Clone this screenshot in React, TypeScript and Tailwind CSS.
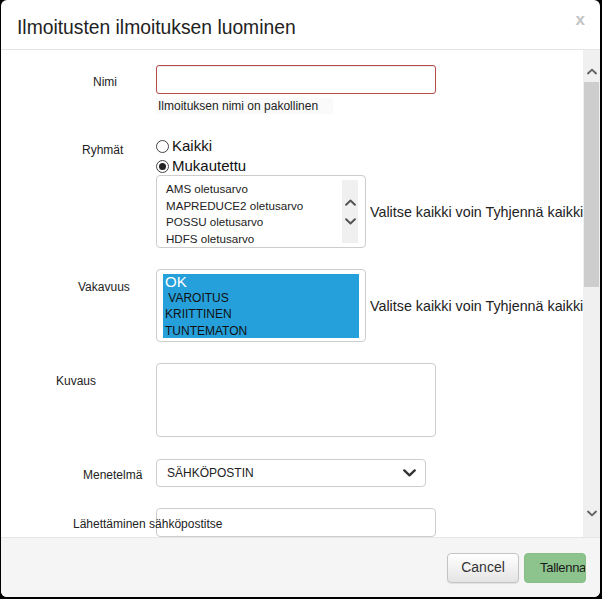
import React from "react";

const Chevron = ({ dir, className }: { dir: "up" | "down"; className?: string }) => (
  <svg viewBox="0 0 10 6" className={className} fill="none">
    <path
      d={dir === "up" ? "M1 5 L5 1.2 L9 5" : "M1 1 L5 4.8 L9 1"}
      stroke="currentColor"
      strokeWidth="1.8"
      strokeLinecap="round"
      strokeLinejoin="round"
    />
  </svg>
);

const Radio = ({ checked }: { checked?: boolean }) => (
  <span className="flex h-[13px] w-[13px] items-center justify-center rounded-full border border-[#444] bg-white">
    {checked && <span className="h-[7px] w-[7px] rounded-full bg-[#222]" />}
  </span>
);

const groups = ["AMS oletusarvo", "MAPREDUCE2 oletusarvo", "POSSU oletusarvo", "HDFS oletusarvo"];

export default function App() {
  return (
    <div className="h-[599px] w-[602px] overflow-hidden bg-black pl-px font-['Liberation_Sans',Arial,sans-serif]">
      <div className="flex h-[597px] w-[599px] flex-col overflow-hidden rounded-[6px] bg-white">
        {/* --- Header --- */}
        <header className="flex h-[50px] shrink-0 items-start justify-between border-b border-[#e5e5e5] pl-[16px] pr-[15px]">
          <h1 className="pt-[17px] text-[19.3px] leading-[22px] text-[#222]">
            Ilmoitusten ilmoituksen luominen
          </h1>
          <span className="pt-[10px] text-[17px] font-bold leading-[20px] text-[#c4c4c4]">x</span>
        </header>

        {/* --- Body --- */}
        <div className="flex min-h-0 flex-1">
          <div className="min-w-0 flex-1 overflow-hidden pt-[15px] text-[12px] text-[#222]">
            {/* Nimi */}
            <div className="flex">
              <div className="w-[155px] shrink-0 pl-[92px] pt-[10px] leading-[14px]">Nimi</div>
              <div>
                <div className="h-[29px] w-[280px] rounded-[3px] border border-[#b44c4a] shadow-[inset_0_1px_1px_rgba(0,0,0,0.075)]" />
                <div className="mt-[4px] w-[177px] bg-[#fafafa] pl-[2px] leading-[16px] text-[#222]">
                  Ilmoituksen nimi on pakollinen
                </div>
              </div>
            </div>

            {/* Ryhmät */}
            <div className="mt-[22px] flex">
              <div className="w-[155px] shrink-0 pl-[81px] pt-[7px] leading-[14px]">Ryhmät</div>
              <div>
                <div className="flex h-[20px] items-center gap-[3px] text-[15px] text-[#111]">
                  <Radio />
                  <span>Kaikki</span>
                </div>
                <div className="mt-px flex h-[18px] items-center gap-[3px] text-[15px] text-[#111]">
                  <Radio checked />
                  <span>Mukautettu</span>
                </div>
                <div className="flex items-center">
                  <div className="flex h-[73px] w-[210px] rounded-[4px] border border-[#cdcdcd] bg-white">
                    <div className="min-w-0 flex-1 overflow-hidden pl-[9px] pt-[5px] text-[11.6px] leading-[16.7px] text-[#222]">
                      {groups.map((g) => (
                        <div key={g} className="whitespace-nowrap">{g}</div>
                      ))}
                    </div>
                    <div className="my-[4px] mr-[7px] flex w-[16px] shrink-0 flex-col items-center justify-center gap-[12px] bg-[#f0f0f0] text-[#555]">
                      <Chevron dir="up" className="h-[7px] w-[11px]" />
                      <Chevron dir="down" className="h-[7px] w-[11px]" />
                    </div>
                  </div>
                  <span className="ml-[4px] mt-[3px] whitespace-nowrap text-[14.3px] text-[#222]">
                    Valitse kaikki voin Tyhjennä kaikki
                  </span>
                </div>
              </div>
            </div>

            {/* Vakavuus */}
            <div className="mt-[21px] flex">
              <div className="w-[155px] shrink-0 pl-[77px] pt-[11px] leading-[14px]">Vakavuus</div>
              <div className="flex items-center">
                <div className="h-[73px] w-[210px] rounded-[4px] border border-[#cdcdcd] bg-white pb-[3px] pl-[6px] pr-[6px] pt-[4px]">
                  <div className="h-full overflow-hidden bg-[#26a0da] pl-[2px] leading-[16.3px] text-[#111]">
                    <div className="text-[15px] leading-[16px] text-white">OK</div>
                    <div>{"\u00a0VAROITUS"}</div>
                    <div>KRIITTINEN</div>
                    <div>TUNTEMATON</div>
                  </div>
                </div>
                <span className="ml-[4px] mt-[3px] whitespace-nowrap text-[14.3px] text-[#222]">
                  Valitse kaikki voin Tyhjennä kaikki
                </span>
              </div>
            </div>

            {/* Kuvaus */}
            <div className="mt-[21px] flex">
              <div className="w-[155px] shrink-0 pl-[55px] pt-[11px] leading-[14px]">Kuvaus</div>
              <div className="h-[74px] w-[280px] rounded-[4px] border border-[#cdcdcd] bg-white" />
            </div>

            {/* Menetelmä */}
            <div className="mt-[22px] flex">
              <div className="w-[155px] shrink-0 pl-[82px] pt-[9px] leading-[14px]">Menetelmä</div>
              <div className="flex h-[28px] w-[270px] items-center justify-between rounded-[4px] border border-[#cdcdcd] bg-white pl-[10px] pr-[9px]">
                <span className="text-[12px] text-[#222]">SÄHKÖPOSTIN</span>
                <Chevron dir="down" className="h-[8px] w-[13px] text-[#333]" />
              </div>
            </div>

            {/* Lähettäminen sähköpostitse */}
            <div className="mt-[21px] flex">
              <div className="relative z-10 w-[155px] shrink-0 whitespace-nowrap pl-[72px] pt-[9px] leading-[14px]">
                Lähettäminen sähköpostitse
              </div>
              <div className="h-[29px] w-[280px] rounded-[4px] border border-[#cdcdcd] bg-white" />
            </div>
          </div>

          {/* --- Scrollbar --- */}
          <div className="flex w-[17px] shrink-0 flex-col items-center bg-[#f0f0f0] text-[#606060]">
            <Chevron dir="up" className="mt-[18px] h-[7px] w-[10px]" />
            <div className="mt-[7px] h-[205px] w-[15px] bg-[#cdcdcd]" />
            <div className="flex-1" />
            <Chevron dir="down" className="mb-[20px] h-[7px] w-[10px]" />
          </div>
        </div>

        {/* --- Footer --- */}
        <footer className="flex h-[60px] shrink-0 items-center justify-end gap-[5px] border-t border-[#e5e5e5] bg-[#f5f5f5] pr-[14px]">
          <button className="h-[30px] w-[72px] rounded-[4px] border border-[#c4c4c4] bg-gradient-to-b from-white to-[#e4e4e4] text-[14px] text-[#333] shadow-[0_1px_1px_rgba(0,0,0,0.08)]">
            Cancel
          </button>
          <button className="h-[30px] w-[62px] overflow-hidden whitespace-nowrap rounded-[4px] border border-[#86be87] bg-[#8dc48e] pl-[15px] text-left text-[13px] tracking-[-0.3px] text-[#1a1a1a]">
            Tallenna
          </button>
        </footer>
      </div>
    </div>
  );
}
